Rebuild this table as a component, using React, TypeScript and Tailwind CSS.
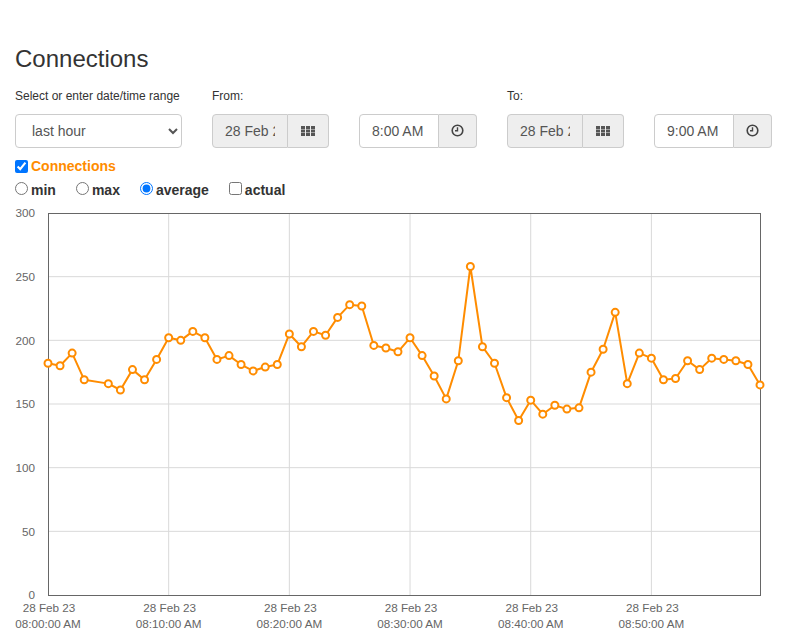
import React from "react";

const FONT = { fontFamily: '"Liberation Sans", Arial, Helvetica, sans-serif' };

// average connections per minute (minute 4 missing)
const minutes = [0, 1, 2, 3, ...Array.from({ length: 55 }, (_, i) => i + 5)];
const values = [
  182, 180, 190, 169, 166, 161, 177, 169, 185, 202,
  200, 207, 202, 185, 188, 181, 176, 179, 181, 205,
  195, 207, 204, 218, 228, 227, 196, 194, 191, 202,
  188, 172, 154, 184, 258, 195, 182, 155, 137, 153,
  142, 149, 146, 147, 175, 193, 222, 166, 190, 186,
  169, 170, 184, 177, 186, 185, 184, 181, 165,
];

const LEFT = 48;
const RIGHT = 760;
const TOP = 13;
const BOTTOM = 395;
const xOf = (m: number) => LEFT + (m * (RIGHT - LEFT)) / 59;
const yOf = (v: number) => BOTTOM - (v * (BOTTOM - TOP)) / 300;

function GridIcon() {
  return (
    <svg width="15" height="10" viewBox="0 0 15 10" fill="#555">
      {[0, 5, 10].map((x) =>
        [0, 3.5, 7].map((y) => <rect key={`${x}-${y}`} x={x} y={y} width="4" height="3" />)
      )}
    </svg>
  );
}

function ClockIcon() {
  return (
    <svg width="13" height="13" viewBox="0 0 13 13" fill="none" stroke="#444">
      <circle cx="6.5" cy="6.5" r="5.3" strokeWidth="1.6" />
      <path d="M6.5 3.2V6.8H4" strokeWidth="1.4" />
    </svg>
  );
}

function DateGroup({ value }: { value: string }) {
  return (
    <div className="flex h-[34px] w-[117px]">
      <input
        readOnly
        value={value}
        className="h-full w-[76px] rounded-l-[4px] border border-[#ccc] bg-[#eee] px-[12px] text-[14px] text-[#555] outline-none"
      />
      <span className="flex h-full w-[41px] items-center justify-center rounded-r-[4px] border border-l-0 border-[#ccc] bg-[#eee]">
        <GridIcon />
      </span>
    </div>
  );
}

function TimeGroup({ value }: { value: string }) {
  return (
    <div className="flex h-[34px] w-[118px]">
      <input
        readOnly
        value={value}
        className="h-full w-[80px] rounded-l-[4px] border border-[#ccc] bg-white px-[12px] text-[14px] text-[#555] outline-none"
      />
      <span className="flex h-full w-[38px] items-center justify-center rounded-r-[4px] border border-l-0 border-[#ccc] bg-[#eee]">
        <ClockIcon />
      </span>
    </div>
  );
}

function Chart() {
  const pts = minutes.map((m, i) => [xOf(m), yOf(values[i])] as const);
  const ticks = [0, 10, 20, 30, 40, 50];
  return (
    <svg width="787" height="434" className="block" style={FONT}>
      {[50, 100, 150, 200, 250].map((v) => (
        <line key={v} x1={LEFT} x2={RIGHT} y1={yOf(v)} y2={yOf(v)} stroke="#d9d9d9" strokeWidth="1" />
      ))}
      {ticks.slice(1).map((m) => (
        <line key={m} x1={xOf(m)} x2={xOf(m)} y1={TOP} y2={BOTTOM} stroke="#d9d9d9" strokeWidth="1" />
      ))}
      <rect x={LEFT + 0.5} y={TOP + 0.5} width={RIGHT - LEFT} height={BOTTOM - TOP} fill="none" stroke="#666" />
      {[0, 50, 100, 150, 200, 250, 300].map((v) => (
        <text key={v} x="35" y={yOf(v) + 4.2} textAnchor="end" fontSize="11.7" fill="#666">
          {v}
        </text>
      ))}
      {ticks.map((m) => (
        <g key={m} fontSize="11.7" fill="#666" textAnchor="middle">
          <text x={xOf(m) + 1} y="411.5">28 Feb 23</text>
          <text x={xOf(m)} y="428.3">{`08:${String(m).padStart(2, "0")}:00 AM`}</text>
        </g>
      ))}
      <polyline
        points={pts.map(([x, y]) => `${x},${y}`).join(" ")}
        fill="none"
        stroke="#ff8c00"
        strokeWidth="2"
        strokeLinejoin="round"
      />
      {pts.map(([x, y], i) => (
        <circle key={i} cx={x} cy={y} r="3.5" fill="#fff" stroke="#ff8c00" strokeWidth="2" />
      ))}
    </svg>
  );
}

export default function App() {
  return (
    <div className="min-h-[634px] bg-white text-[#333]" style={FONT}>
      <div className="px-[15px]">
        <h1 className="pt-[46px] text-[24px] leading-[26.4px] font-normal">Connections</h1>

        <div className="mt-[16px] flex gap-[30px]">
          <div className="w-[167px]">
            <p className="text-[12px] leading-[17px]">Select or enter date/time range</p>
            <select
              defaultValue="last hour"
              className="mt-[8.5px] h-[34px] w-full rounded-[4px] border border-[#ccc] bg-white px-[12px] text-[14px] text-[#555] outline-none"
            >
              <option>last hour</option>
              <option>last day</option>
              <option>last week</option>
            </select>
          </div>
          <div>
            <p className="text-[12px] leading-[17px]">From:</p>
            <div className="mt-[8.5px] flex gap-[30px]">
              <DateGroup value="28 Feb 2023" />
              <TimeGroup value="8:00 AM" />
            </div>
          </div>
          <div>
            <p className="text-[12px] leading-[17px]">To:</p>
            <div className="mt-[8.5px] flex gap-[30px]">
              <DateGroup value="28 Feb 2023" />
              <TimeGroup value="9:00 AM" />
            </div>
          </div>
        </div>

        <label className="mt-[8.5px] flex h-[20px] items-center gap-[3px] text-[14px] font-bold text-[#ff8c00]">
          <input type="checkbox" defaultChecked className="m-0 h-[13px] w-[13px]" />
          Connections
        </label>

        <div className="mt-[4px] flex h-[20px] items-start gap-[20px] text-[14px] font-bold leading-[20px]">
          <label className="flex items-start gap-[3px]">
            <input type="radio" name="agg" className="m-0 mt-[2px] h-[13px] w-[13px]" />
            min
          </label>
          <label className="flex items-start gap-[3px]">
            <input type="radio" name="agg" className="m-0 mt-[2px] h-[13px] w-[13px]" />
            max
          </label>
          <label className="flex items-start gap-[3px]">
            <input type="radio" name="agg" defaultChecked className="m-0 mt-[2px] h-[13px] w-[13px]" />
            average
          </label>
          <label className="flex items-start gap-[3px]">
            <input type="checkbox" className="m-0 mt-[2px] h-[13px] w-[13px]" />
            actual
          </label>
        </div>
      </div>

      <Chart />
    </div>
  );
}
